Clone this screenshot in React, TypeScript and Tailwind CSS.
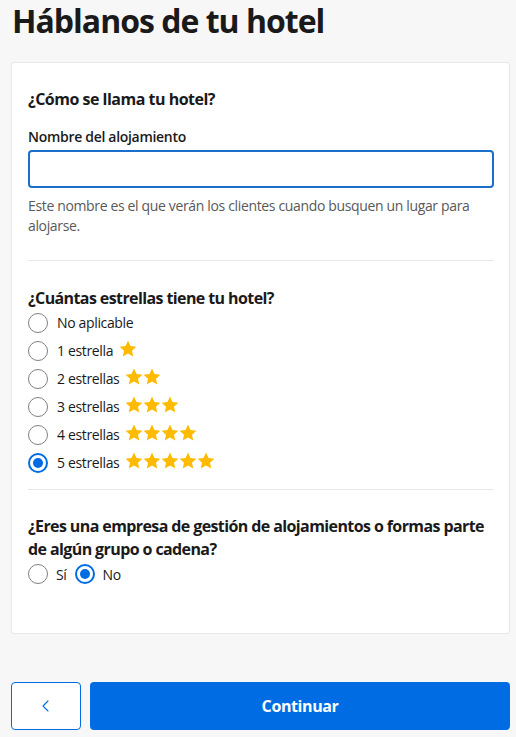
import React from "react";

const Star = () => (
  <svg width="18" height="18" viewBox="0 0 24 24" className="shrink-0">
    <path
      d="M12 0.8l3.3 7.2 7.9.9-5.9 5.4 1.7 7.8L12 18.1l-7 4 1.7-7.8L.8 8.9l7.9-.9z"
      fill="#febb02"
    />
  </svg>
);

const Radio = ({ checked }: { checked?: boolean }) =>
  checked ? (
    <span className="flex h-[20px] w-[20px] shrink-0 items-center justify-center rounded-full border-2 border-[#006ce4] bg-white">
      <span className="h-[10px] w-[10px] rounded-full bg-[#006ce4]" />
    </span>
  ) : (
    <span className="h-[20px] w-[20px] shrink-0 rounded-full border border-[#808080] bg-white" />
  );

export default function App() {
  const options = [
    { label: "No aplicable", stars: 0 },
    { label: "1 estrella", stars: 1 },
    { label: "2 estrellas", stars: 2 },
    { label: "3 estrellas", stars: 3 },
    { label: "4 estrellas", stars: 4 },
    { label: "5 estrellas", stars: 5, checked: true },
  ];
  return (
    <div
      className="min-h-[737px] w-[516px] bg-[#f7f7f7] text-[#1a1a1a]"
      style={{ fontFamily: '"Open Sans", "Noto Sans", sans-serif' }}
    >
      <h1 className="px-[12px] text-[32px] font-bold leading-[42px] tracking-[-1px]">
        Háblanos de tu hotel
      </h1>
      <div className="ml-[11px] mt-[20px] h-[572px] w-[499px] rounded-[3px] border border-[#e7e7e7] bg-white pl-[16px] pr-[15px] pt-[24px]">
        <h2 className="text-[16px] font-bold leading-[24px] tracking-[-0.5px]">¿Cómo se llama tu hotel?</h2>
        <div className="mt-[16px] text-[14px] font-semibold leading-[20px] tracking-[-0.3px]">Nombre del alojamiento</div>
        <div className="mt-[3px] h-[38px] w-full rounded-[4px] border-2 border-[#1b6fcb]" />
        <p className="mt-[8px] text-[14px] leading-[20px] text-[#595959] tracking-[-0.35px]">
          Este nombre es el que verán los clientes cuando busquen un lugar para alojarse.
        </p>
        <div className="mt-[24px] h-px bg-[#e7e7e7]" />
        <h2 className="mt-[25px] text-[16px] font-bold leading-[24px] tracking-[-0.6px]">
          ¿Cuántas estrellas tiene tu hotel?
        </h2>
        <div className="-mt-[1px] flex flex-col">
          {options.map((o) => (
            <div key={o.label} className="flex h-[28px] items-center">
              <Radio checked={o.checked} />
              <span className="ml-[9px] text-[14px] leading-[20px] tracking-[-0.35px]">{o.label}</span>
              {o.stars > 0 && (
                <span className="ml-[6px] flex -translate-y-[2px]">
                  {Array.from({ length: o.stars }).map((_, i) => (
                    <Star key={i} />
                  ))}
                </span>
              )}
            </div>
          ))}
        </div>
        <div className="mt-[12px] h-px bg-[#e7e7e7]" />
        <h2 className="mt-[25px] text-[16px] font-bold leading-[23px] tracking-[-0.6px]">
          ¿Eres una empresa de gestión de alojamientos o formas parte
          <br />
          de algún grupo o cadena?
        </h2>
        <div className="-mt-[1px] flex h-[28px] items-center">
          <Radio />
          <span className="ml-[8px] text-[14px] tracking-[-0.35px]">Sí</span>
          <span className="ml-[8px]">
            <Radio checked />
          </span>
          <span className="ml-[8px] text-[14px] tracking-[-0.35px]">No</span>
        </div>
      </div>
      <div className="ml-[11px] mt-[48px] flex w-[499px] gap-[9px]">
        <button className="flex h-[48px] w-[70px] items-center justify-center rounded-[4px] border border-[#006ce4] bg-white text-[#006ce4]">
          <svg width="16" height="16" viewBox="0 0 24 24" fill="none" stroke="#006ce4" strokeWidth="1.6" strokeLinecap="round" strokeLinejoin="round">
            <path d="M15 4.5l-7.5 7.5 7.5 7.5" />
          </svg>
        </button>
        <button className="flex h-[48px] flex-1 items-center justify-center rounded-[4px] bg-[#006ce4] text-[16px] font-bold tracking-[-0.4px] text-white">
          Continuar
        </button>
      </div>
    </div>
  );
}
